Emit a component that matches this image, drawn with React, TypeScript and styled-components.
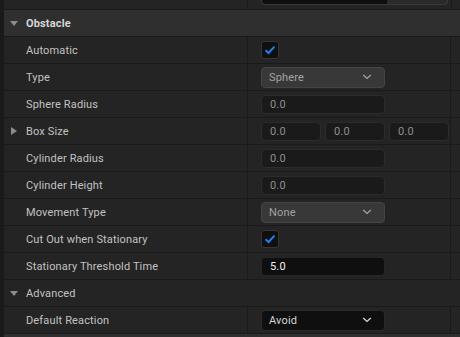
import * as React from 'react'
import styled, { createGlobalStyle } from 'styled-components'

const GlobalStyle = createGlobalStyle`
    html, body {
        margin: 0;
        padding: 0;
        background: #1a1a1a;
    }
    body {
        font-family: Roboto, 'Noto Sans', sans-serif;
        font-size: 11px;
    }
`

const Panel = styled.div`
    width: 460px;
    height: 337px;
    overflow: hidden;
    display: flex;
    flex-direction: column;
    padding-left: 4px;
    box-sizing: border-box;
    background: #1a1a1a;
`

const Row = styled.div<{ $h?: number; $header?: boolean }>`
    display: flex;
    height: ${p => p.$h ?? 26}px;
    flex-shrink: 0;
    background: ${p => (p.$header ? '#2f2f2f' : '#242424')};
    & + & {
        border-top: 1px solid #1a1a1a;
    }
`

const NameCell = styled.div<{ $divider?: boolean }>`
    width: 244px;
    flex-shrink: 0;
    display: flex;
    align-items: center;
    position: relative;
    padding-left: 22px;
    box-sizing: border-box;
    border-right: 1px solid ${p => (p.$divider === false ? 'transparent' : '#1a1a1a')};
`

const ValueCell = styled.div`
    width: 203px;
    flex-shrink: 0;
    display: flex;
    align-items: center;
    gap: 4px;
    padding-left: 13px;
    box-sizing: border-box;
    border-right: 1px solid #1a1a1a;
    overflow: hidden;
`

const Label = styled.span<{ $bold?: boolean }>`
    color: ${p => (p.$bold ? '#d6d6d6' : '#c2c2c2')};
    font-weight: ${p => (p.$bold ? 700 : 400)};
    font-size: 11px;
    letter-spacing: 0.15px;
    white-space: nowrap;
`

const Arrow = styled.span<{ $dir: 'down' | 'right' }>`
    position: absolute;
    width: 0;
    height: 0;
    ${p =>
        p.$dir === 'down'
            ? `left: 6px; top: 11px;
               border-left: 4.5px solid transparent;
               border-right: 4.5px solid transparent;
               border-top: 5px solid #8c8c8c;`
            : `left: 7px; top: 9px;
               border-top: 4.5px solid transparent;
               border-bottom: 4.5px solid transparent;
               border-left: 6px solid #8c8c8c;`}
`

const NumberBox = styled.div<{ $w?: number; $edited?: boolean }>`
    width: ${p => p.$w ?? 124}px;
    height: 19px;
    flex-shrink: 0;
    box-sizing: border-box;
    border-radius: 4px;
    border: 1px solid ${p => (p.$edited ? '#262626' : '#2c2c2c')};
    background: ${p => (p.$edited ? '#0f0f0f' : '#1a1a1a')};
    color: ${p => (p.$edited ? '#f0f0f0' : '#8e8e8e')};
    display: flex;
    align-items: center;
    padding-left: 8px;
    font-size: 11px;
    letter-spacing: 0.15px;
`

const Combo = styled.div<{ $dark?: boolean }>`
    width: 124px;
    height: 21px;
    box-sizing: border-box;
    border-radius: 4px;
    border: 1px solid ${p => (p.$dark ? '#2a2a2a' : '#444444')};
    background: ${p => (p.$dark ? '#0f0f0f' : '#383838')};
    color: ${p => (p.$dark ? '#d4d4d4' : '#a2a2a2')};
    display: flex;
    align-items: center;
    justify-content: space-between;
    padding: 0 12px 0 7px;
    font-size: 11px;
    letter-spacing: 0.15px;
`

const CheckBox = styled.div`
    width: 18px;
    height: 18px;
    box-sizing: border-box;
    border-radius: 3px;
    border: 1px solid #353535;
    background: #0f0f0f;
    display: flex;
    align-items: center;
    justify-content: center;
`

const Spare = styled.div`
    flex: 1;
`

const TopWidget = styled.div`
    margin-top: -1px;
    margin-left: 13px;
    width: 187px;
    height: 6px;
    box-sizing: border-box;
    border: 1px solid #3a3a3a;
    border-top: none;
    border-radius: 0 0 4px 4px;
    background: linear-gradient(to right, #0f0f0f 0 125px, #2a2a2a 125px);
`

const TopValue = styled.div`
    width: 203px;
    flex-shrink: 0;
    border-right: 1px solid #1a1a1a;
`

const Chevron = () => (
    <svg width="10" height="6" viewBox="0 0 10 6">
        <path d="M1.2 1 L5 4.4 L8.8 1" fill="none" stroke="currentColor" strokeWidth="1.4" />
    </svg>
)

const Check = () => (
    <svg width="12" height="10" viewBox="0 0 12 10">
        <path d="M1.5 5.2 L4.6 8 L10.5 1.6" fill="none" stroke="#1f80ea" strokeWidth="2" />
    </svg>
)

type Item =
    | { kind: 'group'; name: string; bold?: boolean }
    | { kind: 'check'; name: string }
    | { kind: 'combo'; name: string; value: string; dark?: boolean }
    | { kind: 'number'; name: string; value: string; edited?: boolean }
    | { kind: 'vector'; name: string; values: string[] }

const items: Item[] = [
    { kind: 'group', name: 'Obstacle', bold: true },
    { kind: 'check', name: 'Automatic' },
    { kind: 'combo', name: 'Type', value: 'Sphere' },
    { kind: 'number', name: 'Sphere Radius', value: '0.0' },
    { kind: 'vector', name: 'Box Size', values: ['0.0', '0.0', '0.0'] },
    { kind: 'number', name: 'Cylinder Radius', value: '0.0' },
    { kind: 'number', name: 'Cylinder Height', value: '0.0' },
    { kind: 'combo', name: 'Movement Type', value: 'None' },
    { kind: 'check', name: 'Cut Out when Stationary' },
    { kind: 'number', name: 'Stationary Threshold Time', value: '5.0', edited: true },
    { kind: 'group', name: 'Advanced' },
    { kind: 'combo', name: 'Default Reaction', value: 'Avoid', dark: true },
]

const renderValue = (item: Item) => {
    switch (item.kind) {
        case 'check':
            return (
                <CheckBox>
                    <Check />
                </CheckBox>
            )
        case 'combo':
            return (
                <Combo $dark={item.dark}>
                    <span>{item.value}</span>
                    <Chevron />
                </Combo>
            )
        case 'number':
            return <NumberBox $edited={item.edited}>{item.value}</NumberBox>
        case 'vector':
            return item.values.map((v, i) => (
                <NumberBox key={i} $w={60}>
                    {v}
                </NumberBox>
            ))
        default:
            return null
    }
}

const App: React.FC = () => (
    <>
        <GlobalStyle />
        <Panel>
            <Row $h={9}>
                <NameCell />
                <TopValue>
                    <TopWidget />
                </TopValue>
                <Spare />
            </Row>
            {items.map(item =>
                item.kind === 'group' ? (
                    <Row key={item.name} $header={item.bold}>
                        <NameCell $divider={false}>
                            <Arrow $dir="down" />
                            <Label $bold={item.bold}>{item.name}</Label>
                        </NameCell>
                    </Row>
                ) : (
                    <Row key={item.name}>
                        <NameCell>
                            {item.kind === 'vector' && <Arrow $dir="right" />}
                            <Label>{item.name}</Label>
                        </NameCell>
                        <ValueCell>{renderValue(item)}</ValueCell>
                        <Spare />
                    </Row>
                )
            )}
            <Row $header />
        </Panel>
    </>
)

export default App
